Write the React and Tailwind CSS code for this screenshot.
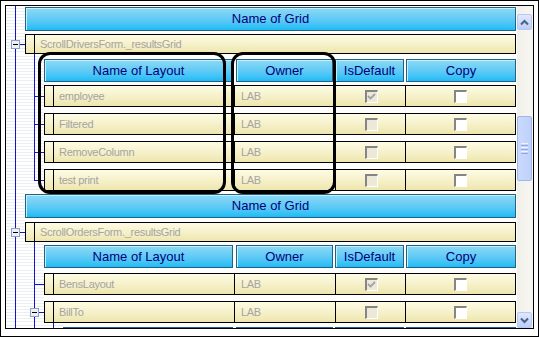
const TREE = '#1414c8';

const hdr =
  'flex items-center justify-center border border-[#24607f] bg-linear-to-b from-[#8cd9f4] to-[#16bcf6] shadow-[inset_1px_1px_0_#c4effc] text-[13px] text-[#00007a]';
const cream = 'bg-linear-to-b from-[#fefce6] to-[#eee6ae]';
const dim = 'text-[11px] tracking-[-0.3px] text-[#a4a4a4]';

// tree connector drawn for one indent column
const Gutter = ({ kind, H, mid }) => (
  <div className="w-[19px] shrink-0 bg-[repeating-linear-gradient(180deg,#ffffff_0px,#ffffff_2px,#eceff1_2px,#eceff1_3px)]">
    <svg width="19" height={H} className="block">
      {kind === 'L' ? (
        <rect x="9" y="0" width="1" height={mid + 1} fill={TREE} />
      ) : (
        <rect x="9" y="0" width="1" height={H} fill={TREE} />
      )}
      {(kind === 'T' || kind === 'L') && <rect x="9" y={mid} width="10" height="1" fill={TREE} />}
      {kind === 'M' && (
        <>
          <rect x="14" y={mid} width="5" height="1" fill={TREE} />
          <rect x="5.5" y={mid - 3.5} width="8" height="8" fill="#eef0f5" stroke="#8aa3c2" />
          <rect x="7" y={mid} width="5" height="1" fill="#000" />
        </>
      )}
    </svg>
  </div>
);

const Row = ({ g, pt, h, children }) => (
  <div className="flex shrink-0">
    {g.map((k, i) => (
      <Gutter key={i} kind={k} H={pt + h} mid={pt + Math.floor(h / 2)} />
    ))}
    <div className="flex min-w-0 flex-1 flex-col justify-end pr-[1px]">{children}</div>
  </div>
);

const GridHeader = () => <div className={`${hdr} h-[24px]`}>Name of Grid</div>;

const FormRow = ({ name }) => (
  <div className={`flex h-[20px] border border-black ${cream}`}>
    <div className="w-[8px] shrink-0" />
    <div className={`flex flex-1 items-center border-l border-black pl-[5px] ${dim}`}>{name}</div>
  </div>
);

const LayoutHeader = ({ blank }) => (
  <div className="flex h-[23px] gap-[2px]">
    <div className={`${hdr} min-w-0 flex-1`}>{!blank && 'Name of Layout'}</div>
    <div className={`${hdr} ml-[1px] w-[97px] shrink-0`}>{!blank && 'Owner'}</div>
    <div className={`${hdr} w-[69px] shrink-0`}>{!blank && 'IsDefault'}</div>
    <div className={`${hdr} w-[110px] shrink-0`}>{!blank && 'Copy'}</div>
  </div>
);

const Checkbox = ({ checked, disabled }) => (
  <div
    className={`flex h-[13px] w-[13px] items-center justify-center border-t-2 border-l-2 border-r border-b border-t-[#858585] border-l-[#858585] border-r-white border-b-white ${
      disabled ? 'bg-[#ece9d8]' : 'bg-white'
    }`}
  >
    {checked && (
      <svg width="9" height="9" viewBox="0 0 9 9">
        <path d="M1 4 L3.5 6.5 L8 2" fill="none" stroke="#a3a3a3" strokeWidth="1.8" />
      </svg>
    )}
  </div>
);

const DataRow = ({ name, checked }) => (
  <div className={`flex h-[22px] border border-black ${cream}`}>
    <div className="w-[8px] shrink-0" />
    <div className={`flex min-w-0 flex-1 items-center border-l border-black pl-[5px] ${dim}`}>{name}</div>
    <div className={`flex w-[101px] shrink-0 items-center border-l border-black pl-[6px] ${dim}`}>LAB</div>
    <div className="flex w-[70px] shrink-0 items-center justify-center border-l border-black pl-[1px]">
      <Checkbox disabled checked={checked} />
    </div>
    <div className="flex w-[110px] shrink-0 items-center justify-center border-l border-black">
      <Checkbox />
    </div>
  </div>
);

const ArrowBtn = ({ up }) => (
  <div className="flex h-[16px] w-[15px] shrink-0 items-center justify-center rounded-[2px] border border-[#b5c9f3] bg-linear-to-b from-[#dfe8fe] to-[#bccff9]">
    <svg width="9" height="7" viewBox="0 0 9 7">
      <polyline
        points={up ? '1,5.5 4.5,2 8,5.5' : '1,1.5 4.5,5 8,1.5'}
        fill="none"
        stroke="#4d6185"
        strokeWidth="2"
      />
    </svg>
  </div>
);

const ScrollBar = () => (
  <div className="flex w-[16px] shrink-0 flex-col bg-linear-to-r from-[#f0efe8] to-[#f8f7f3]">
    <div className="h-[8px] shrink-0" />
    <ArrowBtn up />
    <div className="h-[86px] shrink-0" />
    <div className="flex h-[65px] w-[15px] shrink-0 flex-col items-center justify-center gap-[1px] rounded-[2px] border border-[#9fb6ec] bg-linear-to-r from-[#cad9fd] to-[#bfd1fb]">
      <div className="h-[1px] w-[7px] bg-[#eef3ff]" />
      <div className="h-[1px] w-[7px] bg-[#8fa9e6]" />
      <div className="h-[1px] w-[7px] bg-[#eef3ff]" />
      <div className="h-[1px] w-[7px] bg-[#8fa9e6]" />
      <div className="h-[1px] w-[7px] bg-[#eef3ff]" />
      <div className="h-[1px] w-[7px] bg-[#8fa9e6]" />
    </div>
    <div className="flex-1" />
    <ArrowBtn />
  </div>
);

export default function App() {
  return (
    <div className="relative h-[337px] w-[539px] overflow-hidden border border-black bg-white p-[4px] font-['Liberation_Sans',Arial,sans-serif]">
      <div className="flex h-[324px] border border-black bg-white">
        <div className="flex min-w-0 flex-1 flex-col overflow-hidden">
          <Row g={['I']} pt={1} h={24}>
            <GridHeader />
          </Row>
          <Row g={['M']} pt={3} h={20}>
            <FormRow name="ScrollDriversForm._resultsGrid" />
          </Row>
          <Row g={['I', 'I']} pt={5} h={23}>
            <LayoutHeader />
          </Row>
          <Row g={['I', 'T']} pt={3} h={22}>
            <DataRow name="employee" checked />
          </Row>
          <Row g={['I', 'T']} pt={6} h={22}>
            <DataRow name="Filtered" />
          </Row>
          <Row g={['I', 'T']} pt={6} h={22}>
            <DataRow name="RemoveColumn" />
          </Row>
          <Row g={['I', 'L']} pt={6} h={22}>
            <DataRow name="test print" />
          </Row>
          <Row g={['I']} pt={3} h={24}>
            <GridHeader />
          </Row>
          <Row g={['M']} pt={4} h={20}>
            <FormRow name="ScrollOrdersForm._resultsGrid" />
          </Row>
          <Row g={['I', 'I']} pt={3} h={23}>
            <LayoutHeader />
          </Row>
          <Row g={['I', 'T']} pt={5} h={22}>
            <DataRow name="BensLayout" checked />
          </Row>
          <Row g={['I', 'M']} pt={6} h={22}>
            <DataRow name="BillTo" />
          </Row>
          <Row g={['I', 'I', 'I']} pt={4} h={23}>
            <LayoutHeader blank />
          </Row>
        </div>
        <ScrollBar />
      </div>

      {/* callout outlines drawn over the grid */}
      <div className="pointer-events-none absolute left-[37px] top-[51px] h-[142px] w-[188px] rounded-[12px] border-[3px] border-black" />
      <div className="pointer-events-none absolute left-[230px] top-[51px] h-[142px] w-[105px] rounded-[12px] border-[3px] border-black" />
    </div>
  );
}
